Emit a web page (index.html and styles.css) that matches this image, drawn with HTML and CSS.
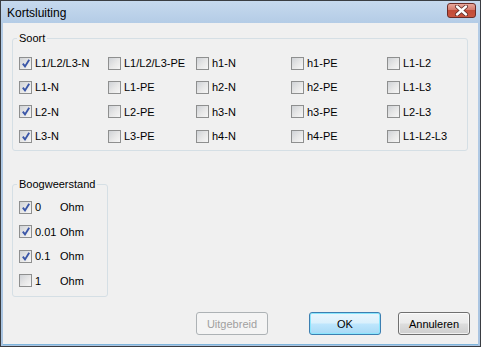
FILE: index.html
```html
<!DOCTYPE html>
<html>
<head>
<meta charset="utf-8">
<link rel="stylesheet" href="styles.css">
</head>
<body>
<div class="window">
  <div class="titlebar">
    <span class="title">Kortsluiting</span>
    <span class="close">
      <svg width="15" height="11" viewBox="0 0 15 11">
        <path d="M3 1.5 L12 9.5 M12 1.5 L3 9.5" stroke="#5a2a26" stroke-width="4" stroke-linecap="round"/>
        <path d="M3 1.5 L12 9.5 M12 1.5 L3 9.5" stroke="#ffffff" stroke-width="2.4" stroke-linecap="round"/>
      </svg>
    </span>
  </div>
  <div class="client">
    <fieldset class="group soort">
      <legend>Soort</legend>
      <div class="grid">
        <label class="cb"><span class="box on"></span>L1/L2/L3-N</label>
        <label class="cb"><span class="box"></span>L1/L2/L3-PE</label>
        <label class="cb"><span class="box"></span>h1-N</label>
        <label class="cb"><span class="box"></span>h1-PE</label>
        <label class="cb"><span class="box"></span>L1-L2</label>

        <label class="cb"><span class="box on"></span>L1-N</label>
        <label class="cb"><span class="box"></span>L1-PE</label>
        <label class="cb"><span class="box"></span>h2-N</label>
        <label class="cb"><span class="box"></span>h2-PE</label>
        <label class="cb"><span class="box"></span>L1-L3</label>

        <label class="cb"><span class="box on"></span>L2-N</label>
        <label class="cb"><span class="box"></span>L2-PE</label>
        <label class="cb"><span class="box"></span>h3-N</label>
        <label class="cb"><span class="box"></span>h3-PE</label>
        <label class="cb"><span class="box"></span>L2-L3</label>

        <label class="cb"><span class="box on"></span>L3-N</label>
        <label class="cb"><span class="box"></span>L3-PE</label>
        <label class="cb"><span class="box"></span>h4-N</label>
        <label class="cb"><span class="box"></span>h4-PE</label>
        <label class="cb"><span class="box"></span>L1-L2-L3</label>
      </div>
    </fieldset>

    <fieldset class="group boog">
      <legend>Boogweerstand</legend>
      <div class="list">
        <label class="cb"><span class="box on"></span><span class="val">0</span>Ohm</label>
        <label class="cb"><span class="box on"></span><span class="val">0.01</span>Ohm</label>
        <label class="cb"><span class="box on"></span><span class="val">0.1</span>Ohm</label>
        <label class="cb"><span class="box"></span><span class="val">1</span>Ohm</label>
      </div>
    </fieldset>

    <div class="buttons">
      <button class="btn disabled">Uitgebreid</button>
      <button class="btn default">OK</button>
      <button class="btn">Annuleren</button>
    </div>
  </div>
</div>
</body>
</html>
```

FILE: styles.css
```css
html, body {
  margin: 0;
  padding: 0;
  background: #ffffff;
}

.window {
  box-sizing: border-box;
  width: 481px;
  height: 347px;
  border: 1px solid #3a3d42;
  background: linear-gradient(#c6d9ee 0px, #b4cce6 22px, #a9c4e1 100%);
  padding: 0 2px 2px 2px;
  display: flex;
  flex-direction: column;
  font-family: "Liberation Sans", Arial, sans-serif;
  font-size: 11px;
  color: #000;
}

.titlebar {
  height: 22px;
  display: flex;
  align-items: center;
  justify-content: space-between;
  padding: 0 2px 0 4px;
}

.title {
  font-size: 12px;
  color: #000;
  margin-top: 2px;
}

.close {
  width: 27px;
  height: 13px;
  border: 1px solid #6b2c27;
  border-radius: 3px;
  background: linear-gradient(#e8a89c 0%, #d47a6c 45%, #c24c38 50%, #c9553f 100%);
  display: flex;
  align-items: center;
  justify-content: center;
  margin-top: -4px;
}

.close svg {
  display: block;
}

.client {
  flex: 1;
  background: #f0f0f0;
  display: flex;
  flex-direction: column;
  box-shadow: 0 1px 0 #7fb5dc;
}

.group {
  border: 1px solid #d5dfe5;
  border-radius: 3px;
  margin: 0;
  padding: 0 0 0 4px;
  box-sizing: border-box;
}

.group legend {
  padding: 0 2px;
  line-height: 14px;
  color: #000;
}

.soort {
  margin: 8px 10px 0 9px;
  padding-top: 6px;
  padding-bottom: 2px;
}

.grid {
  display: grid;
  grid-template-columns: 89px 88px 95px 96px 1fr;
  grid-auto-rows: 24.3px;
  padding-left: 2px;
}

.cb {
  display: flex;
  align-items: center;
  white-space: nowrap;
}

.box {
  box-sizing: border-box;
  width: 13px;
  height: 13px;
  border: 1px solid #8e8f8f;
  background: linear-gradient(135deg, #cfd2d6 0%, #e8e8e8 55%, #f6f6f6 100%);
  margin-right: 3px;
  flex: none;
  position: relative;
}

.box.on::after {
  content: "";
  position: absolute;
  left: 2px;
  top: 1px;
  width: 8px;
  height: 9px;
  background: url("data:image/svg+xml;utf8,<svg xmlns='http://www.w3.org/2000/svg' width='8' height='9' viewBox='0 0 8 9'><path d='M0.8 4.6 L3 7.4 L7.2 0.8' fill='none' stroke='%233b57a8' stroke-width='1.9'/></svg>") no-repeat;
}

.boog {
  width: 96px;
  margin: 26px 0 0 9px;
  padding-top: 4px;
  padding-bottom: 3px;
}

.list {
  display: grid;
  grid-auto-rows: 24.5px;
  padding-left: 2px;
}

.val {
  display: inline-block;
  width: 25px;
}

.buttons {
  margin-top: auto;
  display: flex;
  justify-content: flex-end;
  padding: 0 8px 9px 0;
}

.btn {
  box-sizing: border-box;
  width: 72px;
  height: 23px;
  font-family: "Liberation Sans", Arial, sans-serif;
  font-size: 11px;
  color: #000;
  border: 1px solid #707070;
  border-radius: 3px;
  background: linear-gradient(#f2f2f2 0%, #ebebeb 48%, #dddddd 52%, #cfcfcf 100%);
  box-shadow: inset 0 0 0 1px rgba(255,255,255,0.7);
  padding: 0;
  margin: 0;
}

.btn.disabled {
  color: #a0a0a0;
  border-color: #adb2b5;
  background: #f4f4f4;
  box-shadow: none;
  margin-right: 41px;
}

.btn.default {
  border-color: #3c7fb1;
  background: linear-gradient(#eaf6fd 0%, #d9f0fc 48%, #bee6fd 52%, #a7d9f5 100%);
  box-shadow: inset 0 0 0 1px #8ae6fd;
  margin-right: 17px;
}
```
